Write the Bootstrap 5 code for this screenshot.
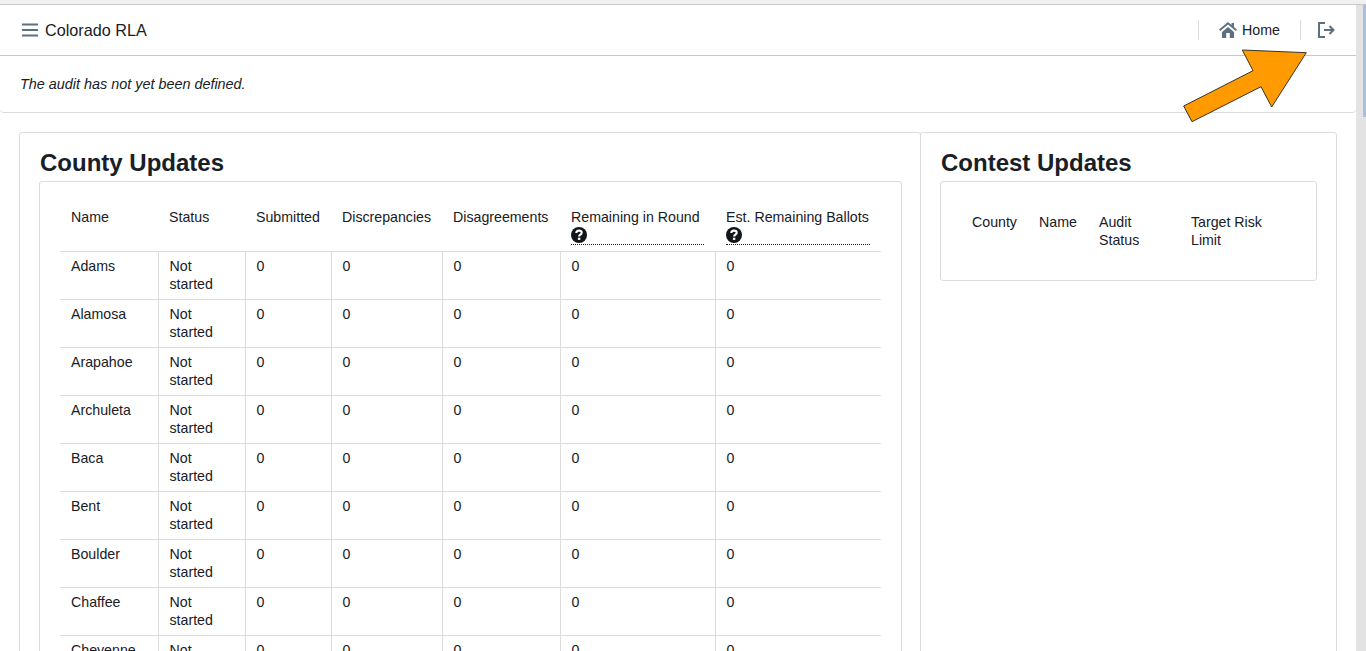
<!DOCTYPE html>
<html lang="en">
<head>
    <meta charset="UTF-8">
    <meta name="viewport" content="width=device-width, initial-scale=1.0">
    <link href="https://cdn.jsdelivr.net/npm/bootstrap@5.3.3/dist/css/bootstrap.min.css" rel="stylesheet">
    <title>Colorado RLA</title>
    <style>
        html, body {
            height: 100%;
            overflow: hidden;
        }
        body {
            font-family: "Liberation Sans", Arial, sans-serif;
            font-size: 14.2px;
            line-height: 18px;
            color: #182026;
            background-color: #fff;
        }
        .page-shell {
            height: 651px;
        }
        .page-main {
            min-width: 0;
            overflow: hidden;
        }
        .top-strip {
            height: 5px;
            flex: none;
            background-color: #f1f1f1;
            border-bottom: 1px solid #c8c8c8;
        }
        .app-nav {
            height: 51px;
            padding: 0 19px 0 21px;
            border-bottom: 1px solid #c8c8c8;
        }
        .nav-title {
            font-size: 16.2px;
            line-height: 20px;
            margin-left: 6px;
        }
        .nav-divider {
            width: 1px;
            height: 20px;
            background-color: #dcdcdc;
        }
        .home-item {
            width: 101px;
            padding-left: 20px;
        }
        .home-label {
            margin-left: 5px;
        }
        .logout-item {
            width: 36px;
            padding-left: 17px;
        }
        .audit-note {
            height: 57px;
            padding: 19px 20px 0;
            border-bottom: 1px solid #dcdcdc;
            border-radius: 0 0 4px 4px;
            font-size: 14.4px;
            font-style: italic;
        }
        .content-area {
            padding: 19px 19px 0;
        }
        .panel-box {
            border: 1px solid #dcdcdc;
            border-radius: 3px;
            padding: 20px 18px 0 19px;
        }
        .county-box {
            width: 902px;
            flex: none;
        }
        .contest-box {
            width: 417px;
            flex: none;
            margin-left: -1px;
            padding-right: 19px;
        }
        .panel-title {
            font-family: "Liberation Sans", Arial, sans-serif;
            font-size: 24px;
            line-height: 20px;
            font-weight: 700;
            margin: 0 0 8px 1px;
            color: #182026;
        }
        .inner-box {
            border: 1px solid #dcdcdc;
            border-radius: 3px;
            padding: 20px;
        }
        .county-inner {
            height: 600px;
        }
        .rla-table {
            table-layout: fixed;
            width: 100%;
            border-collapse: collapse;
        }
        .rla-table th {
            font-weight: 400;
            vertical-align: top;
            padding: 6px 11px 6px;
            border-bottom: 1px solid #dcdcdc;
        }
        .rla-table td {
            vertical-align: top;
            padding: 5px 11px 6px;
            border-top: 1px solid #dcdcdc;
            border-left: 1px solid #dcdcdc;
        }
        .rla-table tr:first-child td {
            border-top: 0;
        }
        .rla-table td:first-child {
            border-left: 0;
        }
        .contest-table th {
            padding: 11px;
            border-bottom: 0;
        }
        .w-name { width: 98px; }
        .w-status { width: 87px; }
        .w-submitted { width: 86px; }
        .w-discrepancies { width: 111px; }
        .w-disagreements { width: 118px; }
        .w-remaining { width: 155px; }
        .w-est { width: 166px; }
        .c-county { width: 67px; }
        .c-name { width: 60px; }
        .c-status { width: 92px; }
        .help-label {
            display: block;
            height: 37px;
            border-bottom: 1px dotted #182026;
            white-space: nowrap;
        }
        .help-remaining { width: 133px; }
        .help-est { width: 144px; }
        .help-icon {
            display: block;
            margin-top: 1px;
        }
        .side-scroll {
            width: 10px;
            flex: none;
            background-color: #e3e3e3;
        }
        .scroll-thumb {
            width: 3px;
            height: 112px;
            margin-left: auto;
            background-color: #a7c0dc;
        }
        .callout-arrow {
            position: absolute;
            left: 1180px;
            top: 46px;
        }
    </style>
</head>
<body>
    <div class="page-shell d-flex flex-column position-relative">
        <div class="top-strip"></div>
        <div class="d-flex flex-grow-1 overflow-hidden">
            <div class="page-main flex-grow-1">
                <nav class="app-nav d-flex align-items-center justify-content-between">
                    <div class="d-flex align-items-center">
                        <svg width="18" height="14" viewBox="0 0 18 14" aria-hidden="true"><path d="M1 1.500h16M1 7h16M1 12.500h16" stroke="#5c7080" stroke-width="2"/></svg>
                        <span class="nav-title">Colorado RLA</span>
                    </div>
                    <div class="d-flex align-items-center">
                        <span class="nav-divider"></span>
                        <div class="home-item d-flex align-items-center">
                            <svg width="18" height="16" viewBox="0 0 18 16" aria-hidden="true"><path fill="#5c7080" d="M9 0 0 7.600l1.200 1.400L9 2.400 16.800 9 18 7.600 15 5V1h-2.500v1.900zM3 10 9 4.900l6 5.100v6h-4.200v-5H7.200v5H3z"/></svg>
                            <span class="home-label">Home</span>
                        </div>
                        <span class="nav-divider"></span>
                        <div class="logout-item d-flex align-items-center">
                            <svg width="18" height="16" viewBox="0 0 18 16" aria-hidden="true"><path fill="none" stroke="#5c7080" stroke-width="2" d="M7 1H1v14h6M6 8h9M11.500 4l4 4-4 4"/></svg>
                        </div>
                    </div>
                </nav>
                <div class="audit-note">The audit has not yet been defined.</div>
                <div class="content-area d-flex">
                    <section class="panel-box county-box">
                        <h2 class="panel-title">County Updates</h2>
                        <div class="inner-box county-inner">
                            <table class="rla-table">
                                <colgroup>
                                    <col class="w-name"><col class="w-status"><col class="w-submitted"><col class="w-discrepancies"><col class="w-disagreements"><col class="w-remaining"><col class="w-est">
                                </colgroup>
                                <thead>
                                    <tr>
                                        <th>Name</th>
                                        <th>Status</th>
                                        <th>Submitted</th>
                                        <th>Discrepancies</th>
                                        <th>Disagreements</th>
                                        <th>
                                            <span class="help-label help-remaining">Remaining in Round
                                                <svg class="help-icon" width="16" height="16" viewBox="0 0 16 16" aria-hidden="true"><circle cx="8" cy="8" r="8" fill="#10161a"/><path d="M5.300 6.100C5.300 4.500 6.500 3.600 8 3.600s2.700.9 2.700 2.200c0 1.900-2.600 1.900-2.600 3.800" fill="none" stroke="#fff" stroke-width="2.100"/><rect x="6.900" y="10.700" width="2.400" height="2.200" fill="#fff"/></svg>
                                            </span>
                                        </th>
                                        <th>
                                            <span class="help-label help-est">Est. Remaining Ballots
                                                <svg class="help-icon" width="16" height="16" viewBox="0 0 16 16" aria-hidden="true"><circle cx="8" cy="8" r="8" fill="#10161a"/><path d="M5.300 6.100C5.300 4.500 6.500 3.600 8 3.600s2.700.9 2.700 2.200c0 1.900-2.600 1.900-2.600 3.800" fill="none" stroke="#fff" stroke-width="2.100"/><rect x="6.900" y="10.700" width="2.400" height="2.200" fill="#fff"/></svg>
                                            </span>
                                        </th>
                                    </tr>
                                </thead>
                                <tbody id="county-rows"></tbody>
                            </table>
                        </div>
                    </section>
                    <section class="panel-box contest-box">
                        <h2 class="panel-title">Contest Updates</h2>
                        <div class="inner-box">
                            <table class="rla-table contest-table">
                                <colgroup>
                                    <col class="c-county"><col class="c-name"><col class="c-status"><col>
                                </colgroup>
                                <thead>
                                    <tr>
                                        <th>County</th>
                                        <th>Name</th>
                                        <th>Audit Status</th>
                                        <th>Target Risk Limit</th>
                                    </tr>
                                </thead>
                            </table>
                        </div>
                    </section>
                </div>
            </div>
            <div class="side-scroll"><div class="scroll-thumb"></div></div>
        </div>
        <svg class="callout-arrow" width="130" height="80" viewBox="1180 46 130 80" aria-hidden="true">
            <polygon points="1306.300,52.700 1242.300,50 1253,70.700 1183.700,106 1192,121.700 1261,86.700 1271.700,107" fill="#ff9a00" stroke="#3a3320" stroke-width="1"/>
        </svg>
    </div>
    <script>
        // County rows, all the same until the audit starts
        const counties = ["Adams", "Alamosa", "Arapahoe", "Archuleta", "Baca", "Bent", "Boulder", "Chaffee", "Cheyenne"];
        document.getElementById("county-rows").innerHTML = counties.map(name =>
            `<tr><td>${name}</td><td>Not started</td><td>0</td><td>0</td><td>0</td><td>0</td><td>0</td></tr>`
        ).join("");
    </script>
    <script src="https://cdn.jsdelivr.net/npm/bootstrap@5.3.3/dist/js/bootstrap.bundle.min.js"></script>
</body>
</html>
